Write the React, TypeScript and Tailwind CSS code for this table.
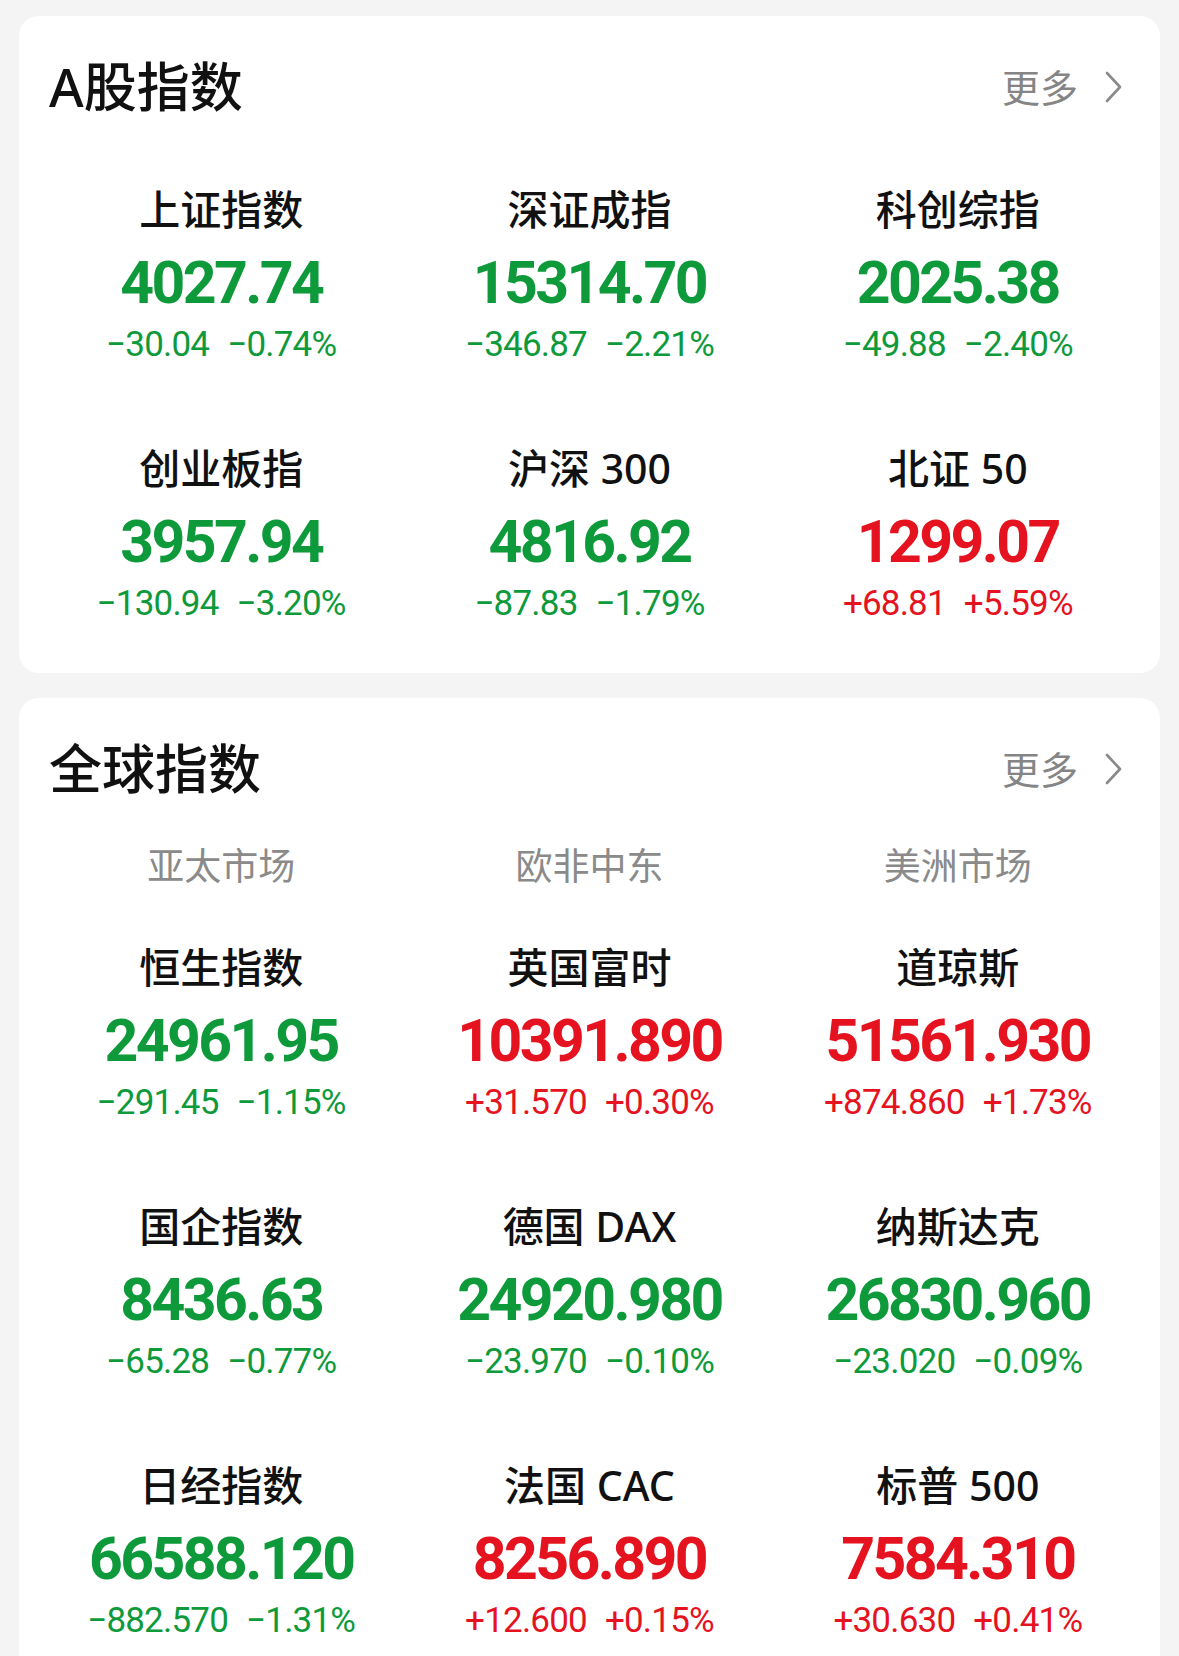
import React from 'react';

type Quote = {
  name: string;
  value: string;
  change: string;
  pct: string;
  up: boolean;
};

const aShares: Quote[] = [
  { name: '上证指数', value: '4027.74', change: '−30.04', pct: '−0.74%', up: false },
  { name: '深证成指', value: '15314.70', change: '−346.87', pct: '−2.21%', up: false },
  { name: '科创综指', value: '2025.38', change: '−49.88', pct: '−2.40%', up: false },
  { name: '创业板指', value: '3957.94', change: '−130.94', pct: '−3.20%', up: false },
  { name: '沪深 300', value: '4816.92', change: '−87.83', pct: '−1.79%', up: false },
  { name: '北证 50', value: '1299.07', change: '+68.81', pct: '+5.59%', up: true },
];

const globalIdx: Quote[] = [
  { name: '恒生指数', value: '24961.95', change: '−291.45', pct: '−1.15%', up: false },
  { name: '英国富时', value: '10391.890', change: '+31.570', pct: '+0.30%', up: true },
  { name: '道琼斯', value: '51561.930', change: '+874.860', pct: '+1.73%', up: true },
  { name: '国企指数', value: '8436.63', change: '−65.28', pct: '−0.77%', up: false },
  { name: '德国 DAX', value: '24920.980', change: '−23.970', pct: '−0.10%', up: false },
  { name: '纳斯达克', value: '26830.960', change: '−23.020', pct: '−0.09%', up: false },
  { name: '日经指数', value: '66588.120', change: '−882.570', pct: '−1.31%', up: false },
  { name: '法国 CAC', value: '8256.890', change: '+12.600', pct: '+0.15%', up: true },
  { name: '标普 500', value: '7584.310', change: '+30.630', pct: '+0.41%', up: true },
];

const cjk = "font-['Noto_Sans','Noto_Sans_CJK_SC',sans-serif]";
const num = "font-['Roboto','Noto_Sans_CJK_SC',sans-serif]";

function Header({ title }: { title: string }) {
  return (
    <div className="flex h-[60px] items-center justify-between pl-[30px] pr-[38px]">
      <h2 className={`${cjk} text-[53px] font-medium leading-[60px] text-[#111]`}>{title}</h2>
      <div className="flex items-center gap-[26px] text-[#858585]">
        <span className={`${cjk} text-[38px] leading-[48px]`}>更多</span>
        <svg width="18" height="32" viewBox="0 0 18 32" fill="none">
          <path d="M3 2 L16 16 L3 30" stroke="#8a8a8a" strokeWidth="2.6" strokeLinecap="round" strokeLinejoin="round" />
        </svg>
      </div>
    </div>
  );
}

function Cell({ q }: { q: Quote }) {
  const color = q.up ? 'text-[#e5131f]' : 'text-[#0e9a3b]';
  return (
    <div className="flex flex-col items-center">
      <div className={`${cjk} h-[48px] text-[41px] font-medium leading-[48px] text-[#111]`}>{q.name}</div>
      <div className={`${num} ${color} mt-[15px] h-[70px] text-[59px] font-bold leading-[70px] tracking-[-2.6px]`}>
        {q.value}
      </div>
      <div className={`${num} ${color} mt-[7px] flex h-[40px] gap-[18px] text-[35px] leading-[40px] tracking-[-0.8px]`}>
        <span>{q.change}</span>
        <span>{q.pct}</span>
      </div>
    </div>
  );
}

function Grid({ items }: { items: Quote[] }) {
  return (
    <div className="grid grid-cols-3 gap-y-[79px] px-[18px]">
      {items.map((q) => (
        <Cell key={q.name} q={q} />
      ))}
    </div>
  );
}

export default function App() {
  return (
    <div className="h-[1656px] w-[1179px] overflow-hidden bg-[#f4f4f4] px-[19px] pt-[16px]">
      {/* A股 */}
      <section className="rounded-[20px] bg-white pt-[41px] pb-[49px]">
        <Header title="A股指数" />
        <div className="mt-[68px]">
          <Grid items={aShares} />
        </div>
      </section>

      {/* 全球 */}
      <section className="mt-[25px] rounded-t-[20px] bg-white pt-[41px] pb-[80px]">
        <Header title="全球指数" />
        <div className={`${cjk} mt-[43px] grid grid-cols-3 px-[18px] text-[37px] leading-[48px] text-[#8a8a8a]`}>
          <div className="text-center">亚太市场</div>
          <div className="text-center">欧非中东</div>
          <div className="text-center">美洲市场</div>
        </div>
        <div className="mt-[53px]">
          <Grid items={globalIdx} />
        </div>
      </section>
    </div>
  );
}
